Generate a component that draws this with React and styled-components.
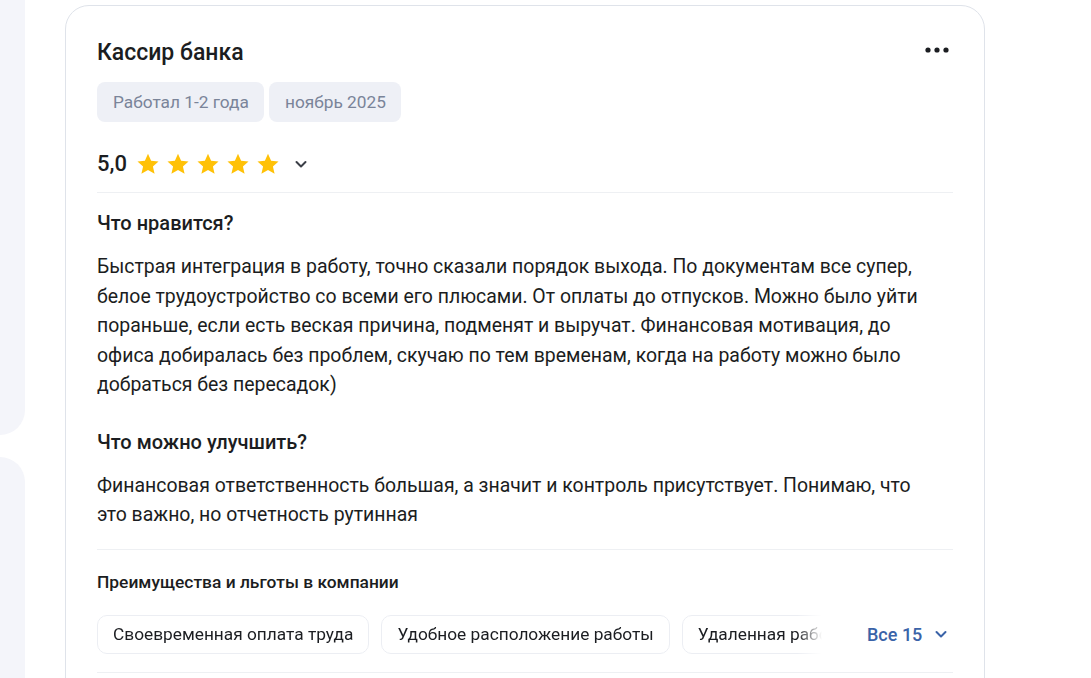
import React from "react";
import styled, { createGlobalStyle } from "styled-components";

const Global = createGlobalStyle`
  html, body { margin: 0; padding: 0; background: #ffffff; }
  body { font-family: Roboto, "Noto Sans", Arial, sans-serif; color: #1b1d21; overflow: hidden; }
  * { box-sizing: border-box; }
`;

const Page = styled.div`
  display: flex;
  align-items: flex-start;
  gap: 40px;
  height: 678px;
  overflow: hidden;
`;

const Side = styled.div`
  width: 25px;
  flex: none;
  display: flex;
  flex-direction: column;
  gap: 22px;
  margin-top: -40px;
`;

const SideBlock = styled.div`
  flex: none;
  background: #f4f5fa;
  height: ${(p) => p.$h}px;
  border-radius: 0 26px 26px 0;
`;

const Card = styled.div`
  width: 920px;
  flex: none;
  margin-top: 5px;
  border: 1px solid #dfe3ea;
  border-radius: 24px;
  padding: 32px 31px 40px 31px;
  height: 760px;
`;

const Header = styled.div`
  display: flex;
  justify-content: space-between;
  align-items: flex-start;
`;

const Title = styled.h2`
  margin: 0;
  font-size: 23px;
  line-height: 30px;
  font-weight: 500;
  color: #1b1d21;
`;

const MoreBtn = styled.button`
  border: 0;
  background: none;
  padding: 0;
  margin: 6px 0 0 0;
  display: flex;
  cursor: pointer;
`;

const Tags = styled.div`
  display: flex;
  gap: 5px;
  margin-top: 14px;
`;

const Tag = styled.span`
  background: #eef0f6;
  color: #7a8499;
  border-radius: 8px;
  font-size: 17.3px;
  line-height: 40px;
  height: 40px;
  padding: 0 15px 0 16px;
`;

const RatingRow = styled.div`
  display: flex;
  align-items: center;
  margin-top: 28px;
  padding-bottom: 14px;
  border-bottom: 1px solid #eef0f3;
`;

const Score = styled.span`
  font-size: 22px;
  line-height: 28px;
  font-weight: 500;
  margin-right: 9px;
`;

const Stars = styled.div`
  display: flex;
  gap: 6px;
`;

const Chevron = styled.span`
  display: flex;
  margin-left: ${(p) => p.$ml ?? 13}px;
  color: ${(p) => p.$color || "#3b3f47"};
`;

const Section = styled.div`
  margin-top: ${(p) => p.$mt}px;
`;

const SectionTitle = styled.h3`
  margin: 0;
  font-size: 20px;
  line-height: 24px;
  font-weight: 500;
`;

const Text = styled.p`
  margin: 17px 0 0;
  font-size: 19.45px;
  line-height: 29.5px;
  font-weight: 400;
  color: #1b1d21;
  white-space: nowrap;
`;

const Divider = styled.div`
  height: 1px;
  background: #eef0f3;
  margin-top: ${(p) => p.$mt}px;
`;

const BenefitsTitle = styled.h4`
  margin: 21px 0 0;
  font-size: 17.4px;
  line-height: 22px;
  font-weight: 500;
`;

const BenefitsRow = styled.div`
  display: flex;
  align-items: center;
  margin-top: 22px;
`;

const Chips = styled.div`
  display: flex;
  gap: 12px;
  width: 725px;
  overflow: hidden;
  flex: none;
  -webkit-mask-image: linear-gradient(to right, #000 700px, transparent 725px);
  mask-image: linear-gradient(to right, #000 700px, transparent 725px);
`;

const Chip = styled.span`
  flex: none;
  border: 1px solid #eceef3;
  border-radius: 10px;
  height: 39px;
  line-height: 37px;
  padding: 0 15px;
  font-size: 17.3px;
  white-space: nowrap;
`;

const AllBtn = styled.button`
  margin-left: 45px;
  border: 0;
  background: none;
  padding: 0;
  display: flex;
  align-items: center;
  font-family: inherit;
  font-size: 18px;
  font-weight: 500;
  color: #3a63a8;
  cursor: pointer;
`;

const Star = () => (
  <svg width="24" height="24" viewBox="0 0 24 24">
    <path
      fill="#ffc107"
      d="M12 1.8l3.1 6.9 7.4.7-5.6 5 1.7 7.4L12 17.9l-6.6 3.9 1.7-7.4-5.6-5 7.4-.7z"
    />
  </svg>
);

const ChevronIcon = ({ size = 16 }) => (
  <svg width={size} height={size} viewBox="0 0 16 16" fill="none">
    <path d="M3.5 6l4.5 4.5L12.5 6" stroke="currentColor" strokeWidth="2" strokeLinecap="round" strokeLinejoin="round" />
  </svg>
);

const Dots = () => (
  <svg width="30" height="12" viewBox="0 0 30 12">
    <circle cx="5" cy="6" r="2.6" fill="#1b1d21" />
    <circle cx="14" cy="6" r="2.6" fill="#1b1d21" />
    <circle cx="23" cy="6" r="2.6" fill="#1b1d21" />
  </svg>
);

const likes = [
  "Быстрая интеграция в работу, точно сказали порядок выхода. По документам все супер,",
  "белое трудоустройство со всеми его плюсами. От оплаты до отпусков. Можно было уйти",
  "пораньше, если есть веская причина, подменят и выручат. Финансовая мотивация, до",
  "офиса добиралась без проблем, скучаю по тем временам, когда на работу можно было",
  "добраться без пересадок)",
];

const improve = [
  "Финансовая ответственность большая, а значит и контроль присутствует. Понимаю, что",
  "это важно, но отчетность рутинная",
];

const Lines = ({ lines }) =>
  lines.map((l, i) => (
    <React.Fragment key={i}>
      {l}
      {i < lines.length - 1 && <br />}
    </React.Fragment>
  ));

export default function App() {
  return (
    <>
      <Global />
      <Page>
        <Side>
          <SideBlock $h={475} />
          <SideBlock $h={400} />
        </Side>
        <Card>
          <Header>
            <Title>Кассир банка</Title>
            <MoreBtn aria-label="Ещё">
              <Dots />
            </MoreBtn>
          </Header>
          <Tags>
            <Tag>Работал 1-2 года</Tag>
            <Tag>ноябрь 2025</Tag>
          </Tags>
          <RatingRow>
            <Score>5,0</Score>
            <Stars>
              {[0, 1, 2, 3, 4].map((i) => (
                <Star key={i} />
              ))}
            </Stars>
            <Chevron>
              <ChevronIcon />
            </Chevron>
          </RatingRow>
          <Section $mt={18}>
            <SectionTitle>Что нравится?</SectionTitle>
            <Text>
              <Lines lines={likes} />
            </Text>
          </Section>
          <Section $mt={30}>
            <SectionTitle>Что можно улучшить?</SectionTitle>
            <Text>
              <Lines lines={improve} />
            </Text>
          </Section>
          <Divider $mt={19} />
          <BenefitsTitle>Преимущества и льготы в компании</BenefitsTitle>
          <BenefitsRow>
            <Chips>
              <Chip>Своевременная оплата труда</Chip>
              <Chip>Удобное расположение работы</Chip>
              <Chip>Удаленная работа</Chip>
              <Chip>Обучение</Chip>
            </Chips>
            <AllBtn>
              Все 15
              <Chevron $color="#3a63a8" $ml={11}>
                <ChevronIcon />
              </Chevron>
            </AllBtn>
          </BenefitsRow>
          <Divider $mt={18} />
        </Card>
      </Page>
    </>
  );
}
